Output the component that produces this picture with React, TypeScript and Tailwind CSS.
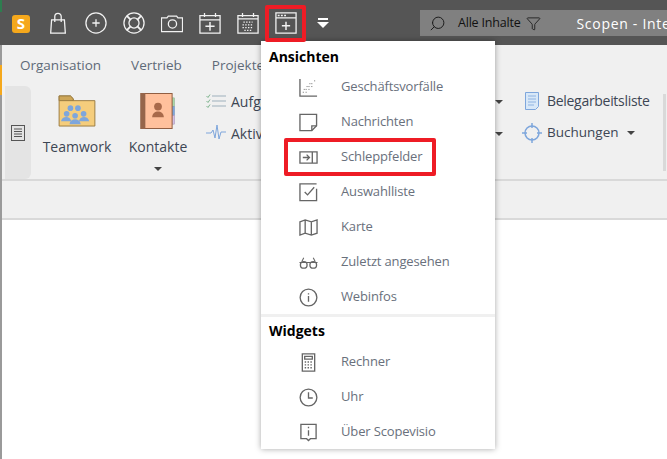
import { Search, Filter } from "lucide-react";

const font = "font-['Open_Sans','Noto_Sans',sans-serif]";

function Caret({ className = "" }: { className?: string }) {
  return <div className={`w-0 h-0 border-x-[4px] border-x-transparent border-t-[4px] border-t-[#444] ${className}`} />;
}

function TopIcon({ children }: { children: React.ReactNode }) {
  return (
    <svg width="22" height="22" viewBox="0 0 24 24" fill="none" stroke="#f2f2f2" strokeWidth="1.400" className="shrink-0">
      {children}
    </svg>
  );
}

function Toolbar() {
  return (
    <div className="h-[45px] bg-[#555555] flex items-center relative">
      <div className="w-[18px] h-[18px] ml-[12px] mr-[17px] mt-[2px] rounded-[3px] bg-[#f5a81c] flex items-center justify-center text-white font-bold text-[15px] leading-none shrink-0">S</div>
      <div className="flex items-center gap-[16px] mt-[1px]">
        <TopIcon>
          <path d="M5 8.500h14l1 14.500h-16zM8.500 11V5a3.500 3.500 0 0 1 7 0v6" />
        </TopIcon>
        <TopIcon>
          <circle cx="12" cy="12" r="11" />
          <path d="M12 8v8M8 12h8" />
        </TopIcon>
        <TopIcon>
          <circle cx="12" cy="12" r="11" />
          <circle cx="12" cy="12" r="5.500" />
          <path d="M4 4l4.500 4.500M20 4l-4.500 4.500M4 20l4.500-4.500M20 20l-4.500-4.500" strokeWidth="2" />
        </TopIcon>
        <TopIcon>
          <path d="M0.500 6.500h6l1.500-2h9l1.500 2h5v15h-23z" />
          <circle cx="12.500" cy="13" r="4.500" />
        </TopIcon>
        <TopIcon>
          <path d="M1 4h22v19h-22zM1 8.500h22M6 1v4.500M18 1v4.500" />
          <path d="M12 11v9.500M7 15.500h10" strokeWidth="1.600" />
        </TopIcon>
        <TopIcon>
          <path d="M1 4h22v19h-22zM1 7.500h22M6 1v4.500M18 1v4.500" />
          <path d="M7 11h10M6 14h12M6 17h12M8 20h8" strokeDasharray="1.500 1.500" strokeWidth="1.500" />
        </TopIcon>
        <TopIcon>
          <path d="M1 1h22v22h-22zM1 6.500h22" />
          <path d="M3 3.800h2M6.500 3.800h2M10 3.800h2" />
          <path d="M12 10.500v9M7.500 15h9" strokeWidth="1.600" />
        </TopIcon>
      </div>
      <div className="ml-[20px] flex flex-col items-center gap-[2px]">
        <div className="w-[10px] h-[2px] bg-white" />
        <div className="w-0 h-0 border-x-[6px] border-x-transparent border-t-[6px] border-t-white" />
      </div>
      <div className="absolute left-[420px] top-[10px] right-0 h-[26px] bg-[#808080] flex items-center overflow-hidden">
        <Search size={17} strokeWidth={1.400} color="#1c1c1c" className="ml-[9px] -scale-x-100 shrink-0" />
        <span className="ml-[12px] text-[12.500px] text-[#111] tracking-[-0.2px] whitespace-nowrap">Alle Inhalte</span>
        <Filter size={15} strokeWidth={1.400} color="#1c1c1c" className="ml-[6px] shrink-0" />
        <span className="ml-[35px] text-[14px] text-white tracking-[0.7px] whitespace-nowrap">Scopen - Intel</span>
      </div>
      <div className="absolute left-0 top-0 w-[2px] h-[12px] bg-[#2e7d4f]" />
    </div>
  );
}

function Ribbon() {
  return (
    <div className="h-[175px] bg-[#f0f0f0] flex flex-col border-b-[2px] border-b-[#d9d9d9]">
      <div className="h-[40px] flex items-center text-[13.500px] text-[#5e6a78] shrink-0">
        <span className="ml-[18px]">Organisation</span>
        <span className="ml-[30px]">Vertrieb</span>
        <span className="ml-[30px]">Projekte</span>
      </div>
      <div className="h-[96px] flex border-b-[2px] border-[#d9d9d9] shrink-0">
        <div className="w-[26px] h-[93px] mt-px ml-[3px] bg-[#e4e4e4] rounded-r-[6px] flex items-center justify-center shrink-0">
          <svg width="14" height="16" viewBox="0 0 14 16" fill="none" stroke="#555" strokeWidth="1">
            <rect x="0.500" y="0.500" width="13" height="15" />
            <path d="M3 4h8M3 6.500h8M3 9h8M3 11.500h8" strokeWidth="1.200" />
          </svg>
        </div>
        <div className="w-[92px] flex flex-col items-center pt-[10px] shrink-0">
          <svg width="38" height="32" viewBox="0 0 40 34">
            <path d="M1 1h12l3 3v2h23v27H1z" fill="#f5cd7c" stroke="#987a3f" />
            <path d="M1 1h12l3 3v2H1z" fill="#cda658" stroke="#987a3f" />
            <g fill="#7ea6dc">
              <circle cx="13" cy="14" r="3" />
              <circle cx="21" cy="14" r="3" />
              <circle cx="9" cy="20" r="3" />
              <circle cx="27" cy="20" r="3" />
              <circle cx="18" cy="22" r="3" />
              <path d="M3 28c1-6 10-6 11 0zM22 28c1-6 10-6 11 0zM12 31c1-7 11-7 12 0z" />
            </g>
          </svg>
          <span className="mt-[10px] text-[14px] leading-[20px] text-[#3d4654]">Teamwork</span>
        </div>
        <div className="w-[70px] flex flex-col items-center pt-[8px] shrink-0">
          <svg width="36" height="36" viewBox="0 0 36 37">
            <rect x="32" y="5" width="3" height="9" fill="#a8d8a8" stroke="#8aa88a" strokeWidth="0.500" />
            <rect x="32" y="14" width="3" height="9" fill="#7ea6dc" stroke="#6c8cb8" strokeWidth="0.500" />
            <rect x="32" y="23" width="3" height="9" fill="#d2bfe4" stroke="#9b88ad" strokeWidth="0.500" />
            <rect x="0.500" y="0.500" width="32" height="36" fill="#ffc09c" stroke="#8f5c3f" />
            <rect x="0" y="0" width="5" height="37" fill="#96654a" />
            <circle cx="18" cy="14" r="4" fill="#a8694a" />
            <path d="M12 25c0-8 12-8 12 0z" fill="#a8694a" />
          </svg>
          <span className="mt-[8px] text-[14px] leading-[20px] text-[#3d4654]">Kontakte</span>
          <Caret className="mt-[10px]" />
        </div>
        <div className="flex flex-col gap-[12px] ml-[13px] pt-[6px] shrink-0">
          <div className="flex items-center gap-[5px] h-[20px]">
            <svg width="20" height="16" viewBox="0 0 20 16" fill="none" stroke="#9eb0bc">
              <path d="M6 3h14M6 8h14M6 13h14" />
              <path d="M0.500 3l1.500 1.500 2-3M0.500 8l1.500 1.500 2-3M0.500 13l1.500 1.500 2-3" stroke="#7fb48e" />
            </svg>
            <span className="text-[14px] text-[#3d4654]">Aufgaben</span>
          </div>
          <div className="flex items-center gap-[5px] h-[20px]">
            <svg width="20" height="18" viewBox="0 0 20 18" fill="none" stroke="#7ea6dc">
              <path d="M0 9h5l2-3 2 8 2-13 2 14 2-7h5" />
            </svg>
            <span className="text-[14px] text-[#3d4654]">Aktivitäten</span>
          </div>
        </div>
        <div className="ml-auto flex mr-px shrink-0">
          <div className="flex flex-col pt-[15px] pr-[22px]">
            <Caret />
            <Caret className="mt-[28px]" />
          </div>
          <div className="flex flex-col w-[138px] pt-[3px]">
            <div className="h-[25px] flex items-center">
              <svg width="14" height="18" viewBox="0 0 14 18" fill="#d8e8f8" stroke="#7ea6dc" className="shrink-0">
                <path d="M0.500 0.500h13v14l-3 3h-10z" />
                <path d="M3 4h8M3 7h8M3 10h8M3 13h6" fill="none" strokeWidth="0.800" />
              </svg>
              <span className="ml-[8px] text-[14px] text-[#3d4654] whitespace-nowrap tracking-[-0.3px]">Belegarbeitsliste</span>
            </div>
            <div className="h-[25px] mt-[7px] flex items-center -ml-[3px]">
              <svg width="20" height="20" viewBox="0 0 20 20" fill="none" stroke="#7ea6dc" strokeWidth="1.500" className="shrink-0">
                <circle cx="10" cy="10" r="7" />
                <path d="M10 0v5M10 15v5M0 10h5M15 10h5" />
              </svg>
              <span className="ml-[5px] text-[13.500px] text-[#3d4654]">Buchungen</span>
              <Caret className="ml-[8px]" />
            </div>
          </div>
          <div className="w-[3px] h-[77px] bg-[#d9d9d9] mt-[9px]" />
        </div>
      </div>
    </div>
  );
}

function MenuItem({ label, icon }: { label: string; icon: React.ReactNode }) {
  return (
    <div className="h-[35px] flex items-center pl-[38px] pt-px shrink-0">
      <div className="w-[19px] h-[19px] flex items-center justify-center shrink-0">{icon}</div>
      <span className="ml-[23px] text-[13px] tracking-[-0.15px] text-[#69707c] whitespace-nowrap">{label}</span>
    </div>
  );
}

function Ico({ children }: { children: React.ReactNode }) {
  return (
    <svg width="19" height="19" viewBox="0 0 20 20" fill="none" stroke="#666" strokeWidth="1.400">
      {children}
    </svg>
  );
}

function DropMenu() {
  return (
    <div className="absolute left-[261px] top-[41px] w-[234px] h-[408px] bg-white shadow-[0_0_6px_rgba(0,0,0,0.35)] flex flex-col">
      <div className="pl-[8px] pt-[6px] h-[28px] shrink-0 text-[14px] font-bold text-black leading-[20px]">Ansichten</div>
      <MenuItem label="Geschäftsvorfälle" icon={<Ico>
        <path d="M1 1v18h18" />
        <path d="M4 15h1M7 12h1M10 9h1M13 6h1M16 3h1M7 15h1M10 12h1M13 9h1M5 12h1M8 9h1M11 6h1" strokeDasharray="1 1" strokeWidth="1" />
      </Ico>} />
      <MenuItem label="Nachrichten" icon={<Ico>
        <path d="M1 1.500h17.500v12l-5 5h-12.500z" />
        <path d="M13.500 18.500v-5h5" />
      </Ico>} />
      <MenuItem label="Schleppfelder" icon={<Ico>
        <path d="M1 4h18v12h-18zM14 4v12" />
        <path d="M4 10h7M8 7l3 3-3 3" />
      </Ico>} />
      <MenuItem label="Auswahlliste" icon={<Ico>
        <path d="M18.500 6v12.500h-17.500v-17.500h17.500" />
        <path d="M6 9.500l3 3 7-8" />
      </Ico>} />
      <MenuItem label="Karte" icon={<Ico>
        <path d="M1 4l5.500-2 6.500 2 6-2v14l-6 2-6.500-2-5.500 2zM6.500 2v14M13 4v14" />
      </Ico>} />
      <MenuItem label="Zuletzt angesehen" icon={<Ico>
        <circle cx="5" cy="12.500" r="3.500" />
        <circle cx="15" cy="12.500" r="3.500" />
        <path d="M0.500 10h19M3 9l2-4M17 9l-2-4" strokeWidth="1.100" />
      </Ico>} />
      <MenuItem label="Webinfos" icon={<Ico>
        <circle cx="10" cy="10" r="8.800" />
        <path d="M10 8.500v6M10 5.500v1.300" />
      </Ico>} />
      <div className="h-[3px] bg-[#f0f0f0] shrink-0" />
      <div className="pl-[8px] pt-[4px] h-[27px] shrink-0 text-[14px] font-bold text-black leading-[20px]">Widgets</div>
      <MenuItem label="Rechner" icon={<Ico>
        <path d="M3.500 1h13v18h-13z" />
        <path d="M6 3.500h8v3h-8z" />
        <path d="M6 9.500h8M6 12.500h8M6 15.500h8" strokeDasharray="1.500 1.500" strokeWidth="1.500" />
      </Ico>} />
      <MenuItem label="Uhr" icon={<Ico>
        <circle cx="10" cy="10" r="8.800" />
        <path d="M10 4.500v6h4.500" />
      </Ico>} />
      <MenuItem label="Über Scopevisio" icon={<Ico>
        <path d="M2 1.500h16v15h-6l-2 2-2-2h-6z" />
        <path d="M10 7.500v6M10 4v1.500" />
      </Ico>} />
    </div>
  );
}

export default function App() {
  return (
    <div className={`w-[667px] h-[459px] bg-white overflow-hidden relative ${font}`}>
      <Toolbar />
      <div className="border-l-[2px] border-[#9a9a9a] h-[414px]">
        <Ribbon />
      </div>
      <div className="absolute left-0 top-[65px] w-[2px] h-[30px] bg-[#f5a81c]" />
      <DropMenu />
      <div className="absolute left-[265px] top-[5px] w-[41px] h-[37px] border-[4px] border-[#ee1c25] rounded-[2px]" />
      <div className="absolute left-[284px] top-[138px] w-[152px] h-[38px] border-[4px] border-[#ee1c25] rounded-[2px]" />
    </div>
  );
}
